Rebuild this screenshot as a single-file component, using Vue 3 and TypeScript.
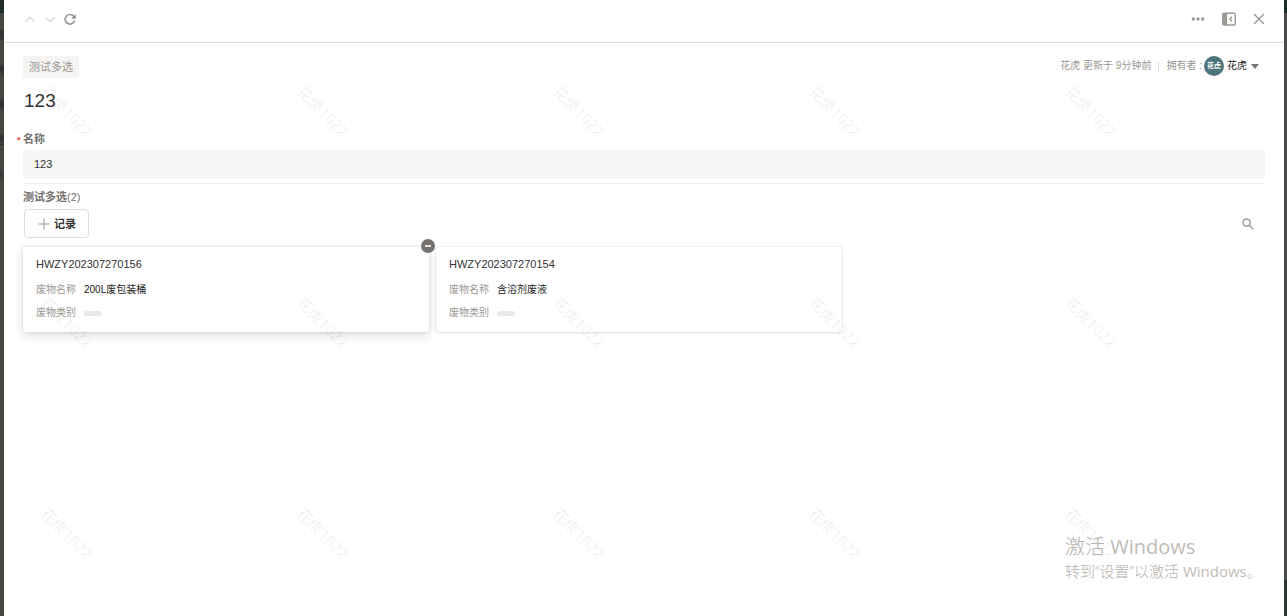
<script setup lang="ts">
import { ref } from 'vue'

interface RecordCard {
  title: string
  name: string
  active: boolean
}

const nameValue = ref('123')
const records: RecordCard[] = [
  { title: 'HWZY202307270156', name: '200L废包装桶', active: true },
  { title: 'HWZY202307270154', name: '含溶剂废液', active: false },
]
const behindRows = ['测', '测', '测', '测', '亲']
</script>

<template>
  <div class="backdrop">
    <div class="behind behind-left" aria-hidden="true">
      <span v-for="(t, i) in behindRows" :key="i" :class="{ faint: i === 4 }">{{ t }}</span>
    </div>
    <main class="panel">
      <header class="toolbar">
        <div class="group nav">
          <button type="button" class="icon pale" aria-label="上一条">
            <svg width="12" height="12" viewBox="0 0 12 12"><path d="M1.500 8.800 6 4.300l4.500 4.500" /></svg>
          </button>
          <button type="button" class="icon pale" aria-label="下一条">
            <svg width="12" height="12" viewBox="0 0 12 12"><path d="M1.500 4.300 6 8.800l4.500-4.500" /></svg>
          </button>
          <button type="button" class="icon reload" aria-label="刷新">
            <svg width="12" height="12" viewBox="0 0 12 12"><path d="M9.800 3.400A4.800 4.800 0 1 0 10.600 7.600" /><path class="fill" d="M11.800 1v4.800H7z" /></svg>
          </button>
        </div>
        <div class="group actions">
          <button type="button" class="icon" aria-label="更多">
            <svg width="14" height="14" viewBox="0 0 14 14"><g class="fill"><circle cx="2.300" cy="7" r="1.700" /><circle cx="7" cy="7" r="1.700" /><circle cx="11.700" cy="7" r="1.700" /></g></svg>
          </button>
          <button type="button" class="icon" aria-label="侧栏">
            <svg width="14" height="14" viewBox="0 0 14 14"><rect x=".8" y="1.200" width="12.400" height="11.800" rx="1.300" /><path class="fill" d="M1 1h4v12H1z" /><path d="M10 4.700 7.900 7l2.100 2.300" /></svg>
          </button>
          <button type="button" class="icon" aria-label="关闭">
            <svg width="12" height="12" viewBox="0 0 12 12"><path d="m1 1 10 10M11 1 1 11" /></svg>
          </button>
        </div>
      </header>

      <div class="content">
        <div class="meta">
          <span class="tag">测试多选</span>
          <div class="owner">
            <span>花虎 更新于 9分钟前</span>
            <i class="bar"></i>
            <span>拥有者 :</span>
            <span class="avatar">花虎</span>
            <button type="button" class="owner-name">花虎<i class="caret"></i></button>
          </div>
        </div>
        <h1>123</h1>

        <label class="label" for="record-name"><span class="star">*</span>名称</label>
        <input id="record-name" v-model="nameValue" class="field" type="text" />

        <section class="related">
          <h2 class="label">测试多选<span class="count">(2)</span></h2>
          <div class="tools">
            <button type="button" class="add">
              <svg width="12" height="12" viewBox="0 0 12 12"><path d="M6 .5v11M.5 6h11" /></svg>记录
            </button>
            <button type="button" class="icon search" aria-label="搜索">
              <svg width="12" height="12" viewBox="0 0 12 12"><circle cx="4.600" cy="4.600" r="3.600" /><path d="m7.300 7.300 4 4" /></svg>
            </button>
          </div>
          <div class="cards">
            <article v-for="r in records" :key="r.title" class="card" :class="{ active: r.active }">
              <h3>{{ r.title }}</h3>
              <dl>
                <dt>废物名称</dt>
                <dd>{{ r.name }}</dd>
                <dt>废物类别</dt>
                <dd><i class="empty"></i></dd>
              </dl>
              <button v-if="r.active" type="button" class="remove" aria-label="移除"></button>
            </article>
          </div>
        </section>
      </div>

      <div class="watermarks" aria-hidden="true">
        <div v-for="n in 15" :key="n" class="cell"><span>花虎1022</span></div>
      </div>
      <aside class="activate">
        <p class="big">激活 <span class="latin">Windows</span></p>
        <p>转到“设置”以激活 <span class="latin">Windows</span>。</p>
      </aside>
    </main>
    <div class="behind behind-right" aria-hidden="true"></div>
  </div>
</template>

<style>
body {
  margin: 0;
}
</style>

<style scoped>
* {
  box-sizing: border-box;
}
.backdrop {
  display: grid;
  grid-template-columns: 4px minmax(0, 1fr) 3px;
  min-height: 100vh;
  font-family: "Liberation Sans", "Noto Sans CJK SC", sans-serif;
  font-size: 11px;
  line-height: 16px;
  color: #333;
}
.behind {
  overflow: hidden;
}
.behind-left {
  display: flex;
  flex-direction: column;
  align-items: flex-end;
  gap: 19px;
  padding-top: 27px;
  background: linear-gradient(#1f2b2a 13px, #484640 13px);
  color: #1c1b19;
}
.faint {
  color: #35332f;
}
.behind-right {
  background: linear-gradient(#1a2d2a 13px, #4a4a48 13px, #4a4a48 580px, #2a3633 580px);
}
.panel {
  position: relative;
  overflow: hidden;
  background: #fff;
}
button {
  padding: 0;
  border: 0;
  background: none;
  font: inherit;
  color: inherit;
}
svg {
  display: block;
  fill: none;
  stroke: currentColor;
  stroke-width: 1.4;
}
.fill {
  fill: currentColor;
  stroke: none;
}
.icon {
  color: #9c9893;
}
.pale {
  color: #dad7d4;
}
.reload svg {
  stroke-width: 1.7;
}
.toolbar {
  display: flex;
  align-items: center;
  justify-content: space-between;
  height: 43px;
  padding: 0 19px 4px 20px;
  border-bottom: 1px solid #dcdcdc;
}
.group {
  display: flex;
  align-items: center;
}
.nav {
  gap: 8px;
}
.actions {
  gap: 17px;
}
.content {
  padding: 13px 19px;
}
.meta {
  display: flex;
  align-items: flex-start;
  justify-content: space-between;
}
.tag {
  padding: 3px 6px;
  border-radius: 2px;
  background: #f5f4f3;
  color: #9c9893;
}
.owner {
  display: flex;
  align-items: center;
  height: 20px;
  padding-right: 6px;
  font-size: 10px;
  color: #9c9893;
}
.bar {
  width: 1px;
  height: 9px;
  margin: 0 7px;
  background: #ddd;
}
.avatar {
  display: flex;
  align-items: center;
  justify-content: center;
  width: 20px;
  height: 20px;
  margin: 0 3px 0 2px;
  border-radius: 50%;
  background: #50747b;
  font-size: 7px;
  font-weight: 700;
  color: #fff;
}
.owner-name {
  display: flex;
  align-items: center;
  gap: 4px;
  color: #222;
}
.caret {
  border: 4px solid transparent;
  border-top: 5px solid #757575;
  border-bottom: 0;
}
h1 {
  margin: 10px 0 17px 1px;
  font-size: 19px;
  font-weight: 400;
  line-height: 26px;
}
.label {
  display: block;
  position: relative;
  margin: 0;
  font-size: 11px;
  line-height: 16px;
  font-weight: 700;
  color: #757270;
}
.count {
  font-weight: 400;
}
.star {
  position: absolute;
  left: -6px;
  top: 1px;
  font-size: 9px;
  color: #f44336;
}
.field {
  display: block;
  width: 100%;
  height: 29px;
  margin-top: 3px;
  padding: 0 11px 1px;
  border: 0;
  border-radius: 3px;
  background: #f6f6f5;
  font: inherit;
  color: #333;
}
.related {
  margin-top: 4px;
  padding-top: 5px;
  border-top: 1px solid #eee;
}
.tools {
  display: flex;
  align-items: center;
  justify-content: space-between;
  margin-top: 4px;
  padding: 0 11px 0 1px;
}
.add {
  display: flex;
  align-items: center;
  gap: 4px;
  height: 29px;
  padding: 0 12px 0 13px;
  border: 1px solid #dedddc;
  border-radius: 4px;
  font-weight: 700;
}
.add svg {
  color: #9c9893;
  stroke-width: 1;
}
.cards {
  display: grid;
  grid-template-columns: repeat(3, minmax(0, 1fr));
  gap: 7px;
  margin-top: 9px;
  padding-right: 10px;
}
.card {
  position: relative;
  padding: 9px 13px 11px;
  border-radius: 3px;
  box-shadow: 0 0 2px rgba(60, 50, 40, 0.25), 0 1px 3px rgba(60, 50, 40, 0.08);
}
.active {
  box-shadow: 0 0 2px rgba(60, 50, 40, 0.18), 0 3px 10px rgba(60, 50, 40, 0.18);
}
h3 {
  margin: 0;
  font-size: 11px;
  font-weight: 400;
}
dl {
  display: grid;
  grid-template-columns: 40px 1fr;
  gap: 7px 8px;
  margin: 10px 0 0;
  font-size: 10px;
}
dt {
  color: #9c9893;
}
dd {
  display: flex;
  align-items: center;
  margin: 0;
  color: #222;
}
.empty {
  width: 18px;
  height: 5px;
  border-radius: 3px;
  background: #eae9e8;
}
.remove {
  position: absolute;
  top: -8px;
  right: -6px;
  display: grid;
  place-items: center;
  width: 14px;
  height: 14px;
  border-radius: 50%;
  background: #757270;
}
.remove::before {
  content: "";
  width: 6px;
  height: 2px;
  background: #e4e2e0;
}
.watermarks {
  position: absolute;
  inset: 0;
  display: grid;
  grid-template-columns: repeat(5, 256px);
  grid-auto-rows: 211px;
  pointer-events: none;
}
.cell {
  display: flex;
  align-items: center;
  justify-content: center;
  width: 126px;
  height: 221px;
}
.cell span {
  transform: rotate(45deg);
  font-family: "Open Sans", "Noto Sans CJK SC", sans-serif;
  font-size: 15px;
  line-height: 20px;
  color: rgba(0, 0, 0, 0.08);
}
.activate {
  position: absolute;
  right: 14px;
  bottom: 34px;
  width: 205px;
  font-family: "Open Sans", "Noto Sans CJK SC", sans-serif;
  font-size: 15px;
  line-height: 22px;
  font-weight: 300;
  white-space: nowrap;
  color: #b5b1ab;
}
.activate p {
  margin: 0;
}
.activate .big {
  font-size: 20px;
  line-height: 26px;
}
.latin {
  font-weight: 400;
  color: #bfbbb6;
}
</style>
